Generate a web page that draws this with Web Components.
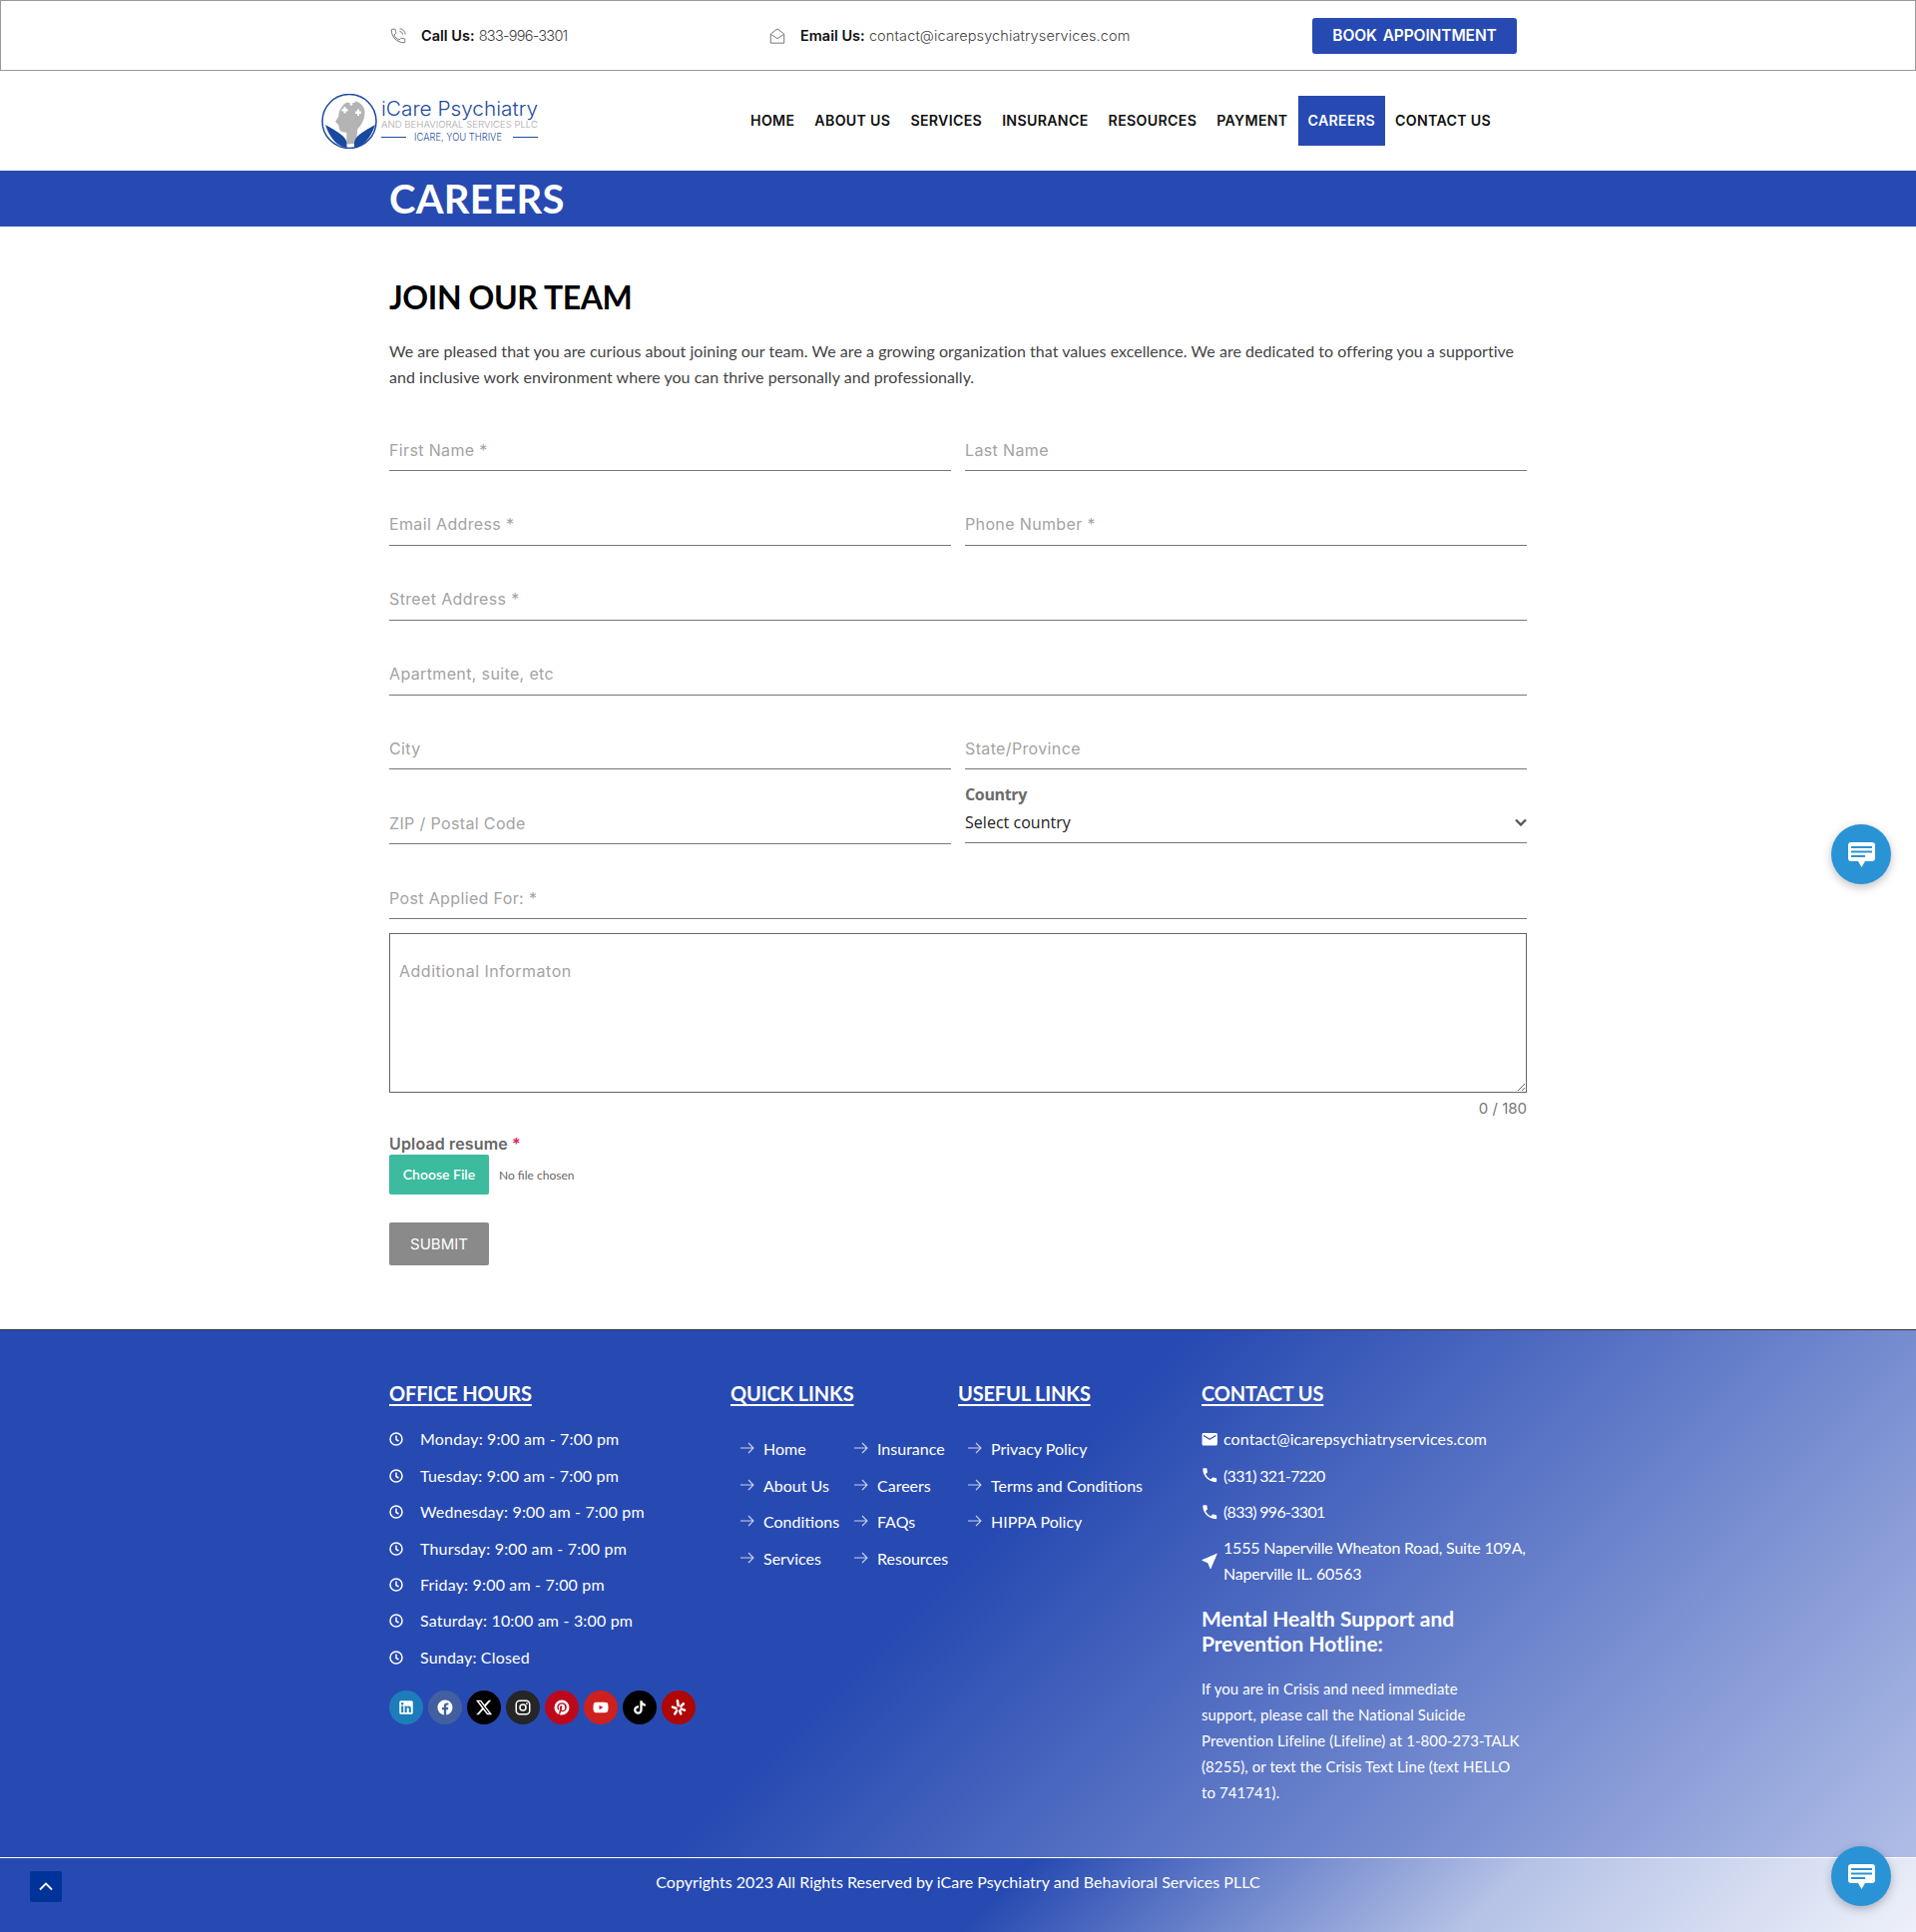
<!DOCTYPE html>
<html lang="en">
<head>
<meta charset="utf-8">
<title>Careers - iCare Psychiatry</title>
<style>
  html, body { margin: 0; padding: 0; }
  body {
    position: relative;
    background: #fff;
    color: #333;
    font-family: Lato, "Liberation Sans", sans-serif;
  }
</style>
</head>
<body>
<site-topbar></site-topbar>
<site-header>
  <nav-item>HOME</nav-item>
  <nav-item>ABOUT US</nav-item>
  <nav-item>SERVICES</nav-item>
  <nav-item>INSURANCE</nav-item>
  <nav-item>RESOURCES</nav-item>
  <nav-item>PAYMENT</nav-item>
  <nav-item active>CAREERS</nav-item>
  <nav-item>CONTACT US</nav-item>
</site-header>
<page-banner>CAREERS</page-banner>

<career-form>
  <text-field>First Name *</text-field>
  <text-field>Last Name</text-field>
  <text-field>Email Address *</text-field>
  <text-field>Phone Number *</text-field>
  <text-field wide>Street Address *</text-field>
  <text-field wide>Apartment, suite, etc</text-field>
  <text-field>City</text-field>
  <text-field>State/Province</text-field>
  <text-field>ZIP / Postal Code</text-field>
  <select-field>Country</select-field>
  <text-field wide>Post Applied For: *</text-field>
</career-form>

<site-footer>
  <footer-col slot="hours" heading="OFFICE HOURS">
    <hour-row>Monday: 9:00 am - 7:00 pm</hour-row>
    <hour-row>Tuesday: 9:00 am - 7:00 pm</hour-row>
    <hour-row>Wednesday: 9:00 am - 7:00 pm</hour-row>
    <hour-row>Thursday: 9:00 am - 7:00 pm</hour-row>
    <hour-row>Friday: 9:00 am - 7:00 pm</hour-row>
    <hour-row>Saturday: 10:00 am - 3:00 pm</hour-row>
    <hour-row>Sunday: Closed</hour-row>
    <social-row></social-row>
  </footer-col>
  <footer-col slot="quick" heading="QUICK LINKS">
    <link-list>
      <link-row>Home</link-row>
      <link-row>Insurance</link-row>
      <link-row>About Us</link-row>
      <link-row>Careers</link-row>
      <link-row>Conditions</link-row>
      <link-row>FAQs</link-row>
      <link-row>Services</link-row>
      <link-row>Resources</link-row>
    </link-list>
  </footer-col>
  <footer-col slot="useful" heading="USEFUL LINKS">
    <link-list single>
      <link-row>Privacy Policy</link-row>
      <link-row>Terms and Conditions</link-row>
      <link-row>HIPPA Policy</link-row>
    </link-list>
  </footer-col>
  <footer-col slot="contact" heading="CONTACT US">
    <contact-row icon="mail">contact@icarepsychiatryservices.com</contact-row>
    <contact-row icon="phone" class="num">(331) 321-7220</contact-row>
    <contact-row icon="phone" class="num">(833) 996-3301</contact-row>
    <contact-row icon="pin" class="addr">1555 Naperville Wheaton Road, Suite 109A,<br>Naperville IL. 60563</contact-row>
    <hotline-note></hotline-note>
  </footer-col>
</site-footer>

<scroll-top></scroll-top>
<chat-bubble class="mid"></chat-bubble>
<chat-bubble class="low"></chat-bubble>

<script>
// small helper, every element gets its own open shadow root from a template
function define(name, html, setup) {
  let tmpl = document.createElement('template');
  tmpl.innerHTML = html;
  customElements.define(name, class extends HTMLElement {
    constructor() {
      super();
      let shadowRoot = this.attachShadow({mode: 'open'});
      shadowRoot.appendChild(tmpl.content.cloneNode(true));
      if (setup) setup(this, shadowRoot);
    }
  });
}

define('site-topbar', `
  <style>
    :host { display: block; border: 1px solid #999; height: 69px; box-sizing: content-box; }
    .wrap { width: 1140px; height: 100%; margin: 0 auto; display: grid; grid-template-columns: 380px 1fr auto; align-items: center; padding-right: 10px; box-sizing: border-box; }
    .item { display: flex; align-items: center; gap: 14px; font: 300 14.500px Inter, sans-serif; color: #444; letter-spacing: 0.13px; }
    .item b { font-weight: 600; color: #111; letter-spacing: 0; }
    .num { letter-spacing: -0.75px; }
    svg { width: 18px; height: 18px; fill: none; stroke: #666; stroke-width: 1.200; flex: none; }
    .book { display: block; height: 36px; width: 205px; text-align: center; border-radius: 3px; background: #274ab2; color: #fff; font: 600 15.500px/36px Inter, sans-serif; word-spacing: 2px; letter-spacing: -0.1px; }
  </style>
  <div class="wrap">
    <div class="item">
      <svg viewBox="0 0 24 24"><path d="M6.600 10.800c1.400 2.800 3.800 5.100 6.600 6.600l2.200-2.200c.3-.3.7-.4 1-.2 1.100.4 2.300.6 3.600.6.500 0 1 .4 1 1V20c0 .6-.5 1-1 1C10.600 21 3 13.400 3 4c0-.5.500-1 1-1h3.500c.6 0 1 .5 1 1 0 1.300.2 2.500.6 3.600.1.300 0 .7-.3 1z"/><path d="M14 2.500a7.500 7.500 0 0 1 7.500 7.500M14 6a4 4 0 0 1 4 4"/></svg>
      <span><b>Call Us:</b> <span class="num">833-996-3301</span></span>
    </div>
    <div class="item">
      <svg viewBox="0 0 24 24"><path d="M3 9.500 12 2.500l9 7V21.500H3z"/><path d="M3.500 10 12 15.500 20.500 10"/></svg>
      <span><b>Email Us:</b> contact@icarepsychiatryservices.com</span>
    </div>
    <span class="book">BOOK APPOINTMENT</span>
  </div>
`);

define('site-header', `
  <style>
    :host { display: flex; align-items: center; height: 100px; padding-left: 322px; box-sizing: border-box; background: #fff; }
    svg { width: 218px; height: 55px; flex: none; display: block; margin-right: 202px; }
    nav { display: flex; align-items: center; }
  </style>
  <svg viewBox="0 0 218 55">
    <ellipse cx="28" cy="27.500" rx="27" ry="27" fill="#fff" stroke="#1d4a9f" stroke-width="1.500"/>
    <path fill="#b4b4b4" d="M21.300 12C26.300 5.300 39.700 5.300 43 15.300 45.300 23.700 39.700 32 36.300 35.300L34.700 50.300H25.300V38.700C21.300 38.700 18.700 38 18 35.300L17.300 31.300 14 28 17.300 22.700C17.300 18.700 18.700 15.300 21.300 12Z"/>
    <path fill="#fff" d="M28.700 4h2.500v2.500h2.500v2.500h-2.500v2.500h-2.500V9h-2.500V6.500h2.500zM22.500 13h2v2h2v2.500h-2v2h-2v-2h-2V15h2zM36 15.500h2v2h2V20h-2v2h-2v-2h-2v-2.500h2z"/>
    <path fill="#1a4a9f" d="M4 31C10 34 16 38 20 41 23 43 25 46 25.500 49V54C17 53 9 46 4 31ZM54 31C48 34 42 38 38 41 35 43 33.500 46 33 49V54C41 53 49 46 54 31Z"/>
    <text x="60" y="21.500" font-family="Inter, sans-serif" font-weight="300" font-size="20" fill="#1e4da0" textLength="157" lengthAdjust="spacingAndGlyphs">iCare Psychiatry</text>
    <text x="60" y="34" font-family="Inter, sans-serif" font-weight="300" font-size="9.500" fill="#a8a8a8" textLength="157" lengthAdjust="spacingAndGlyphs">AND BEHAVIORAL SERVICES PLLC</text>
    <path stroke="#1e4da0" stroke-width="1" d="M60 43.500H85M192 43.500H217"/>
    <text x="93" y="46.500" font-family="Inter, sans-serif" font-weight="300" font-size="10" fill="#1e4da0" textLength="88" lengthAdjust="spacingAndGlyphs">ICARE, YOU THRIVE</text>
  </svg>
  <nav><slot></slot></nav>
`);

define('nav-item', `
  <style>
    :host { display: block; height: 50px; padding: 0 10px; font: 600 14.200px/50px Inter, sans-serif; color: #111; letter-spacing: 0.3px; }
    :host([active]) { background: #274ab2; color: #fff; }
  </style>
  <slot></slot>
`);

define('page-banner', `
  <style>
    :host { display: block; height: 56px; background: #274ab2; color: #fff; font: 700 40px/56px Lato, sans-serif; letter-spacing: 0.3px; }
    div { width: 1140px; margin: 0 auto; }
  </style>
  <div><slot></slot></div>
`);

define('career-form', `
  <style>
    :host { display: block; border-bottom: 1px solid #333; padding: 51px 0 64px; }
    .wrap { width: 1140px; margin: 0 auto; }
    h2 { margin: 0; font: 700 32px/40px Lato, sans-serif; color: #000; letter-spacing: -0.4px; }
    p { margin: 21px 0 31px; font: 400 16px/26px Lato, sans-serif; color: #444; letter-spacing: 0.04px; }
    .grid { display: grid; grid-template-columns: 563px 563px; column-gap: 14px; row-gap: 24.850px; }
    .area { display: grid; margin-top: 14.100px; height: 160px; }
    .area > * { grid-area: 1 / 1; }
    textarea { display: block; box-sizing: border-box; width: 100%; height: 160px; margin: 0; background: transparent; border: 1px solid #666; outline: 0; padding: 0; }
    .area span { padding: 27px 10px 0; font: 400 16px/22px Inter, sans-serif; color: #a3a3a3; pointer-events: none; letter-spacing: 0.5px; }
    .count { margin: 5.700px 0 14.300px; text-align: right; font: 400 15px/20px Inter, sans-serif; color: #777; }
    .up { font: 600 16px/22px Inter, sans-serif; color: #666; letter-spacing: 0.15px; }
    .up i { font-style: normal; color: #e0245e; }
    .file { display: flex; align-items: center; gap: 10px; }
    .file b { display: block; width: 100px; height: 40px; border-radius: 2px; background: #3dbb9e; color: #fff; text-align: center; font: 600 14px/40px Lato, sans-serif; }
    .file span { font: 400 12px Lato, sans-serif; color: #666; }
    .submit { display: block; width: 100px; height: 43px; margin-top: 28px; border-radius: 2px; background: #8a8a8a; color: #fff; text-align: center; font: 400 15px/43px Inter, sans-serif; }
  </style>
  <div class="wrap">
    <h2>JOIN OUR TEAM</h2>
    <p>We are pleased that you are curious about joining our team. We are a growing organization that values excellence. We are dedicated to offering you a supportive and inclusive work environment where you can thrive personally and professionally.</p>
    <div class="grid"><slot></slot></div>
    <div class="area"><textarea aria-label="Additional Informaton"></textarea><span>Additional Informaton</span></div>
    <div class="count">0 / 180</div>
    <div class="up">Upload resume <i>*</i></div>
    <div class="file"><b>Choose File</b><span>No file chosen</span></div>
    <div class="submit">SUBMIT</div>
  </div>
`);

define('text-field', `
  <style>
    :host { display: grid; height: 50px; box-sizing: border-box; border-bottom: 1px solid #777; }
    :host([wide]) { grid-column: 1 / -1; }
    input { grid-area: 1 / 1; border: 0; outline: 0; background: transparent; padding: 0; margin: 0; width: 100%; font: inherit; }
    span { grid-area: 1 / 1; font: 400 16px/22px Inter, sans-serif; color: #a3a3a3; padding-top: 17.500px; pointer-events: none; letter-spacing: 0.36px; }
  </style>
  <input type="text"><span><slot></slot></span>
`);

define('select-field', `
  <style>
    :host { display: block; height: 60px; margin-top: -11px; box-sizing: border-box; border-bottom: 1px solid #777; }
    label { display: block; font: 700 16px/22px "Open Sans", sans-serif; color: #6b6b6b; letter-spacing: -0.35px; }
    .sel { display: flex; align-items: center; justify-content: space-between; margin-top: 6px; }
    select { appearance: none; border: 0; outline: 0; background: transparent; padding: 0; flex: 1; font: 400 16px/22px "Open Sans", sans-serif; color: #222; letter-spacing: 0.03px; }
    svg { width: 12px; height: 8px; flex: none; fill: none; stroke: #555; stroke-width: 2.300; }
  </style>
  <label><slot></slot></label>
  <div class="sel"><select><option>Select country</option></select><svg viewBox="0 0 12 8"><path d="M1 1.500 6 6.500 11 1.500"/></svg></div>
`);

define('site-footer', `
  <style>
    :host { display: block; color: #fff; font-family: Lato, sans-serif; }
    .main { padding: 49px 0 51.800px; background: linear-gradient(135deg, #274ab2 49%, #b0bde6 100%); }
    .cols { width: 1140px; margin: 0 auto; display: grid; grid-template-columns: 342px 228px 244px 326px; }
    .bottom { border-top: 1px solid #fff; height: 75px; box-sizing: border-box; padding-top: 12px; text-align: center; font: 400 16px/24px Lato, sans-serif; letter-spacing: 0.03px; background: linear-gradient(135deg, #274ab2 52%, #b5c2e6 77%, #eef1fa 100%); }
  </style>
  <div class="main"><div class="cols">
    <slot name="hours"></slot><slot name="quick"></slot><slot name="useful"></slot><slot name="contact"></slot>
  </div></div>
  <div class="bottom">Copyrights 2023 All Rights Reserved by iCare Psychiatry and Behavioral Services PLLC</div>
`);

define('footer-col', `
  <style>
    :host { display: block; }
    h3 { margin: 0 0 15px; font: 700 20px/28px Lato, sans-serif; letter-spacing: -0.15px; text-decoration: underline; text-underline-offset: 3px; color: #fff; }
  </style>
  <h3></h3>
  <slot></slot>
`, (el, root) => {
  root.querySelector('h3').textContent = el.getAttribute('heading');
});

define('hour-row', `
  <style>
    :host { display: flex; align-items: center; height: 36.400px; gap: 17px; font: 400 16px/26px Lato, sans-serif; color: #fff; letter-spacing: 0.18px; }
    span { margin-bottom: 2px; }
    svg { width: 14px; height: 14px; flex: none; fill: none; stroke: #fff; stroke-width: 1.500; margin-bottom: 2px; }
  </style>
  <svg viewBox="0 0 14 14"><circle cx="7" cy="7" r="6"/><path d="M7 3.500V7.500L9.500 9"/></svg>
  <span><slot></slot></span>
`);

define('link-list', `
  <style>
    :host { display: grid; grid-template-columns: 114px 114px; padding: 9px 0 0 10px; }
    :host([single]) { grid-template-columns: 1fr; }
  </style>
  <slot></slot>
`);

define('link-row', `
  <style>
    :host { display: flex; align-items: center; height: 36.400px; gap: 9px; font: 400 16px/26px Lato, sans-serif; color: #fff; white-space: nowrap; }
    svg { width: 14px; height: 12px; flex: none; fill: none; stroke: #fff; stroke-opacity: .75; stroke-width: 1.100; margin-bottom: 2px; }
  </style>
  <svg viewBox="0 0 14 12"><path d="M0 6H13M8 1l5 5-5 5"/></svg>
  <span><slot></slot></span>
`);

const contactIcons = {
  mail: 'M20 4H4c-1.100 0-2 .9-2 2v12c0 1.100.9 2 2 2h16c1.100 0 2-.9 2-2V6c0-1.100-.9-2-2-2zm0 4l-8 5-8-5V6l8 5 8-5v2z',
  phone: 'M6.620 10.790c1.440 2.830 3.760 5.140 6.590 6.590l2.200-2.200c.27-.27.67-.36 1.020-.24 1.120.37 2.330.57 3.570.57.55 0 1 .45 1 1V20c0 .55-.45 1-1 1-9.390 0-17-7.610-17-17 0-.55.45-1 1-1h3.500c.55 0 1 .45 1 1 0 1.250.2 2.450.57 3.570.11.35.03.74-.25 1.020l-2.200 2.200z',
  pin: 'M22 2 2 10.500v1l7.500 3L12.500 22h1z'
};

define('contact-row', `
  <style>
    :host { display: flex; align-items: center; padding: 4.200px 0 6.200px; gap: 5px; font: 400 16px/26px Lato, sans-serif; color: #fff; white-space: nowrap; letter-spacing: 0.1px; margin-left: -1.500px; }
    :host(.num) { letter-spacing: -0.7px; }
    :host(.addr) { letter-spacing: -0.2px; }
    svg { width: 18.500px; height: 18.500px; flex: none; fill: #fff; }
  </style>
  <svg viewBox="0 0 24 24"><path></path></svg>
  <span><slot></slot></span>
`, (el, root) => {
  root.querySelector('path').setAttribute('d', contactIcons[el.getAttribute('icon')]);
});

define('hotline-note', `
  <style>
    :host { display: block; margin-top: 12.600px; color: #fff; }
    h4 { margin: 0 0 20px; font: 700 21px/25px Lato, sans-serif; }
    p { margin: 0; font: 400 15px/26px Lato, sans-serif; white-space: nowrap; letter-spacing: 0.08px; }
  </style>
  <h4>Mental Health Support and<br>Prevention Hotline:</h4>
  <p>If you are in Crisis and need immediate<br>support, please call the National Suicide<br>Prevention Lifeline (Lifeline) at 1-800-273-TALK<br>(8255), or text the Crisis Text Line (text HELLO<br>to 741741).</p>
`);

const socialIcons = [
  ['#1d7dbb', 'M19 3a2 2 0 0 1 2 2v14a2 2 0 0 1-2 2H5a2 2 0 0 1-2-2V5a2 2 0 0 1 2-2h14m-.5 15.500v-5.300a3.260 3.260 0 0 0-3.260-3.260c-.85 0-1.840.52-2.320 1.300v-1.110h-2.790v8.370h2.790v-4.930c0-.77.62-1.400 1.390-1.400a1.400 1.400 0 0 1 1.400 1.400v4.930h2.790M6.880 8.560a1.680 1.680 0 0 0 1.680-1.680c0-.93-.75-1.690-1.680-1.690a1.690 1.690 0 0 0-1.690 1.690c0 .93.76 1.680 1.690 1.680m1.390 9.940v-8.370H5.500v8.370h2.770z'],
  ['#42609f', 'M12 2.040c-5.500 0-10 4.490-10 10.020 0 5 3.660 9.150 8.440 9.900v-7H7.900v-2.900h2.540V9.850c0-2.510 1.490-3.890 3.780-3.890 1.090 0 2.230.19 2.230.19v2.470h-1.260c-1.240 0-1.630.77-1.630 1.560v1.880h2.780l-.45 2.900h-2.330v7a10 10 0 0 0 8.440-9.900c0-5.530-4.500-10.020-10-10.020z'],
  ['#000', 'M18.244 2.250h3.308l-7.227 8.260 8.502 11.240H16.170l-5.214-6.817L4.990 21.750H1.680l7.730-8.835L1.254 2.250H8.080l4.713 6.231zm-1.161 17.520h1.833L7.084 4.126H5.117z'],
  ['#262626', 'M7.800 2h8.400C19.400 2 22 4.600 22 7.800v8.400a5.800 5.800 0 0 1-5.800 5.800H7.800C4.600 22 2 19.400 2 16.200V7.800A5.800 5.800 0 0 1 7.800 2m-.2 2A3.600 3.600 0 0 0 4 7.600v8.800C4 18.390 5.610 20 7.600 20h8.800a3.600 3.600 0 0 0 3.600-3.600V7.600C20 5.610 18.390 4 16.400 4H7.600m9.650 1.500a1.250 1.250 0 0 1 1.250 1.250A1.250 1.250 0 0 1 17.250 8 1.250 1.250 0 0 1 16 6.750a1.250 1.250 0 0 1 1.250-1.250M12 7a5 5 0 0 1 5 5 5 5 0 0 1-5 5 5 5 0 0 1-5-5 5 5 0 0 1 5-5m0 2a3 3 0 0 0-3 3 3 3 0 0 0 3 3 3 3 0 0 0 3-3 3 3 0 0 0-3-3z'],
  ['#bd081c', 'M9.040 21.540c.96.29 1.930.46 2.960.46a10 10 0 0 0 10-10A10 10 0 0 0 12 2 10 10 0 0 0 2 12c0 4.250 2.670 7.900 6.440 9.340-.09-.78-.18-2.070 0-2.960l1.150-4.940s-.29-.58-.29-1.500c0-1.380.86-2.410 1.840-2.410.86 0 1.260.63 1.260 1.440 0 .86-.57 2.090-.86 3.270-.17.98.52 1.840 1.520 1.840 1.780 0 3.160-1.900 3.160-4.580 0-2.400-1.720-4.040-4.190-4.040-2.820 0-4.480 2.100-4.480 4.310 0 .86.28 1.730.74 2.300.09.06.09.14.06.29l-.29 1.090c0 .17-.11.23-.28.11-1.280-.56-2.020-2.380-2.020-3.850 0-3.160 2.240-6.030 6.560-6.030 3.440 0 6.120 2.470 6.120 5.750 0 3.440-2.130 6.200-5.180 6.200-.97 0-1.920-.52-2.260-1.130l-.67 2.370c-.23.86-.86 2.010-1.290 2.700v-.03z'],
  ['#cd201f', 'M10 15l5.190-3L10 9v6m11.560-7.830c.13.47.22 1.100.28 1.900.07.8.1 1.490.1 2.090L22 12c0 2.190-.16 3.800-.44 4.830-.25.9-.83 1.480-1.730 1.730-.47.13-1.330.22-2.650.28-1.300.07-2.490.1-3.590.1L12 19c-4.190 0-6.800-.16-7.830-.44-.9-.25-1.480-.83-1.730-1.730-.13-.47-.22-1.100-.28-1.900-.07-.8-.1-1.490-.1-2.090L2 12c0-2.190.16-3.800.44-4.830.25-.9.83-1.480 1.730-1.730.47-.13 1.330-.22 2.650-.28 1.300-.07 2.490-.1 3.590-.1L12 5c4.190 0 6.800.16 7.830.44.9.25 1.480.83 1.730 1.730z'],
  ['#000', 'M16.600 5.820s.51.5 0 0A4.278 4.278 0 0 1 15.540 3h-3.090v12.400a2.592 2.592 0 0 1-2.590 2.500c-1.420 0-2.600-1.160-2.600-2.600 0-1.720 1.660-3.010 3.370-2.480V9.660c-3.450-.46-6.470 2.220-6.470 5.640 0 3.330 2.760 5.700 5.690 5.700 3.140 0 5.690-2.550 5.690-5.700V9.010a7.350 7.350 0 0 0 4.300 1.380V7.300s-1.880.09-3.240-1.480z'],
  ['#af0606', 'yelp']
];

define('social-row', `
  <style>
    :host { display: flex; gap: 5px; margin-top: 14px; }
    span { display: flex; align-items: center; justify-content: center; width: 34px; height: 34px; border-radius: 50%; }
    svg { width: 18px; height: 18px; fill: #fff; }
    .y { fill: none; stroke: #fff; stroke-width: 3.400; stroke-linecap: round; }
  </style>
`, (el, root) => {
  socialIcons.forEach(([bg, d]) => {
    let s = document.createElement('span');
    s.style.background = bg;
    s.innerHTML = d === 'yelp'
      ? '<svg viewBox="0 0 24 24"><path class="y" d="M11.500 9.500 10.500 3M8.500 13 4 11.500M9.500 16.500 7 20.500M13.500 16.500 15 20.500M15.500 14 20 15.500M15 10.500 18.500 7"/></svg>'
      : '<svg viewBox="0 0 24 24"><path d="' + d + '"/></svg>';
    root.appendChild(s);
  });
});

define('scroll-top', `
  <style>
    :host { position: absolute; left: 30px; top: 1875px; width: 32px; height: 31px; border-radius: 2px; background: #003399; display: flex; align-items: center; justify-content: center; }
    svg { width: 14px; height: 9px; fill: none; stroke: #fff; stroke-width: 1.800; }
  </style>
  <svg viewBox="0 0 14 9"><path d="M1 7.500 7 1.500l6 6"/></svg>
`);

define('chat-bubble', `
  <style>
    :host { position: absolute; left: 1835px; width: 60px; height: 60px; border-radius: 50%; background: #2a93d5; box-shadow: 0 3px 10px rgba(0,0,0,.25); display: flex; align-items: center; justify-content: center; }
    :host(.mid) { top: 826px; }
    :host(.low) { top: 1850px; }
    svg { width: 27px; height: 25px; }
  </style>
  <svg viewBox="0 0 27 25"><path fill="#fff" d="M3 0h21a3 3 0 0 1 3 3v13a3 3 0 0 1-3 3h-7l-3.500 6-3.500-6H3a3 3 0 0 1-3-3V3a3 3 0 0 1 3-3z"/><path stroke="#2a93d5" stroke-width="2" d="M3 5H24M3 9.500H24M3 14H17"/></svg>
`);
</script>
</body>
</html>
